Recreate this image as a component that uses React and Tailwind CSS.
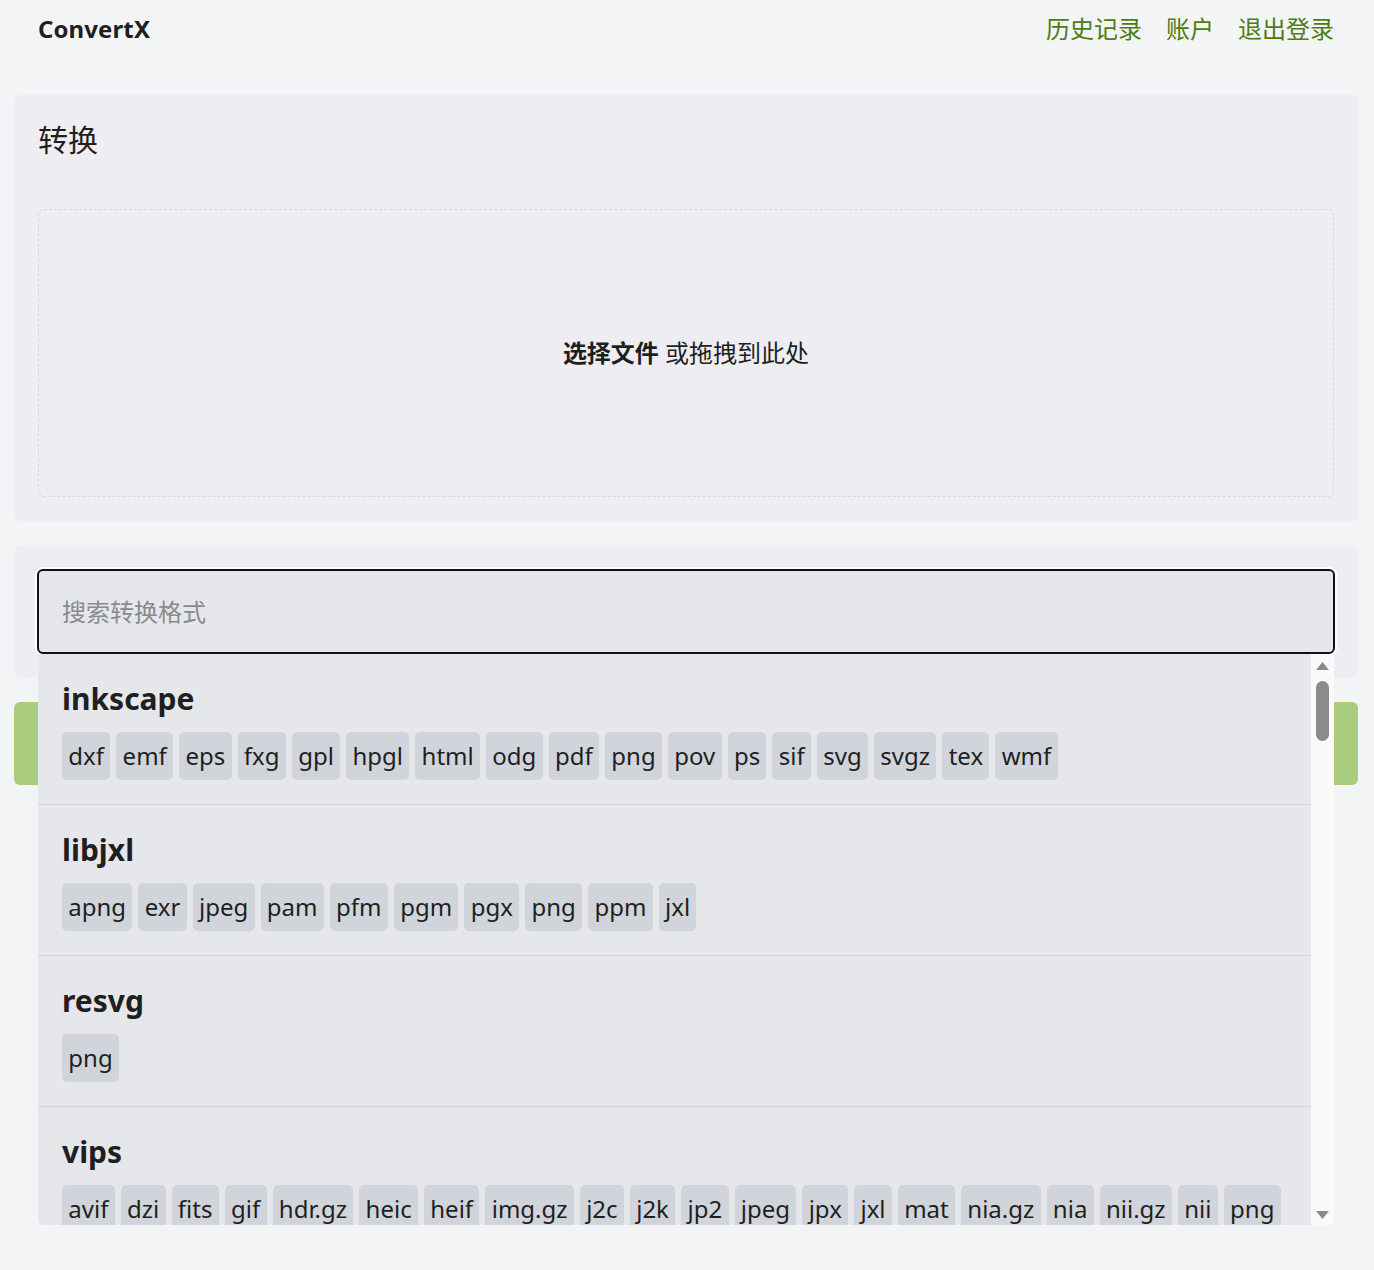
import { useState } from "react";

const groups = [
  {
    name: "inkscape",
    formats: ["dxf", "emf", "eps", "fxg", "gpl", "hpgl", "html", "odg", "pdf", "png", "pov", "ps", "sif", "svg", "svgz", "tex", "wmf"],
  },
  {
    name: "libjxl",
    formats: ["apng", "exr", "jpeg", "pam", "pfm", "pgm", "pgx", "png", "ppm", "jxl"],
  },
  {
    name: "resvg",
    formats: ["png"],
  },
  {
    name: "vips",
    formats: ["avif", "dzi", "fits", "gif", "hdr.gz", "heic", "heif", "img.gz", "j2c", "j2k", "jp2", "jpeg", "jpx", "jxl", "mat", "nia.gz", "nia", "nii.gz", "nii", "png", "ppm", "raw", "tif", "tiff", "webp"],
  },
];

const fontStack = "font-['Segoe_UI','Noto_Sans','Noto_Sans_CJK_SC',sans-serif]";

const App = () => {
  const [query, setQuery] = useState("");

  return (
    <div className={`min-h-screen bg-[#f3f4f6] pl-[14px] pr-[16px] text-[#1f1f1f] ${fontStack}`}>
      <header className="flex h-[58px] items-center justify-between px-[24px]">
        <span className="text-[24px] font-bold tracking-[0.1px]">ConvertX</span>
        <nav className="flex gap-[24px] text-[24px] text-[#4d7c0f]">
          <a href="#">历史记录</a>
          <a href="#">账户</a>
          <a href="#">退出登录</a>
        </nav>
      </header>

      <main className="mt-[37px] flex flex-col gap-[25px]">
        <section className="rounded-[6px] bg-[#eeeef2] p-[24px]">
          <h1 className="text-[30px] leading-[42px]">转换</h1>
          <div className="mt-[48px] flex h-[288px] items-center justify-center rounded-[6px] border border-dashed border-[#d6d6dc] text-[24px]">
            <span>
              <b className="font-bold">选择文件</b> 或拖拽到此处
            </span>
          </div>
        </section>

        <section className="rounded-[6px] bg-[#eeeef2] px-[23px] py-[23px]">
          <div className="relative">
            <input
              type="text"
              value={query}
              onChange={(e) => setQuery(e.target.value)}
              placeholder="搜索转换格式"
              className="h-[85px] w-full rounded-[6px] border-2 border-[#111] bg-[#e5e7eb] px-[23px] text-[24px] outline-none ring-2 ring-white placeholder:text-[#8a8a8e]"
            />
            <div className="absolute left-[1px] right-[1px] top-full z-10 flex h-[571px] overflow-hidden rounded-b-[6px] bg-[#e5e7eb]">
              <div className="flex-1 overflow-hidden">
                {groups.map((g) => (
                  <div key={g.name} className="border-b border-[#d1d5db] p-[24px]">
                    <h2 className="text-[30px] font-bold leading-[42px]">{g.name}</h2>
                    <div className="mt-[12px] flex flex-wrap gap-[6px]">
                      {g.formats.map((f, i) => (
                        <button key={i} className="h-[48px] rounded-[5px] bg-[#d1d5db] px-[6.3px] text-[24px] leading-[48px]">
                          {f}
                        </button>
                      ))}
                    </div>
                  </div>
                ))}
              </div>
              <div className="flex w-[23px] flex-col items-center bg-[#fafafa] pt-[8px] pb-[6px]">
                <svg width="13" height="8" viewBox="0 0 13 8">
                  <path d="M6.5 0 L13 8 L0 8 Z" fill="#8b8b8b" />
                </svg>
                <div className="mt-[11px] h-[60px] w-[13px] rounded-full bg-[#8b8b8b]" />
                <div className="flex-1" />
                <svg width="13" height="8" viewBox="0 0 13 8">
                  <path d="M0 0 L13 0 L6.5 8 Z" fill="#8b8b8b" />
                </svg>
              </div>
            </div>
          </div>
        </section>

        <button className="h-[83px] rounded-[6px] bg-[#a9cc7d] text-[24px] text-white">转换</button>
      </main>
    </div>
  );
};

export default App;
